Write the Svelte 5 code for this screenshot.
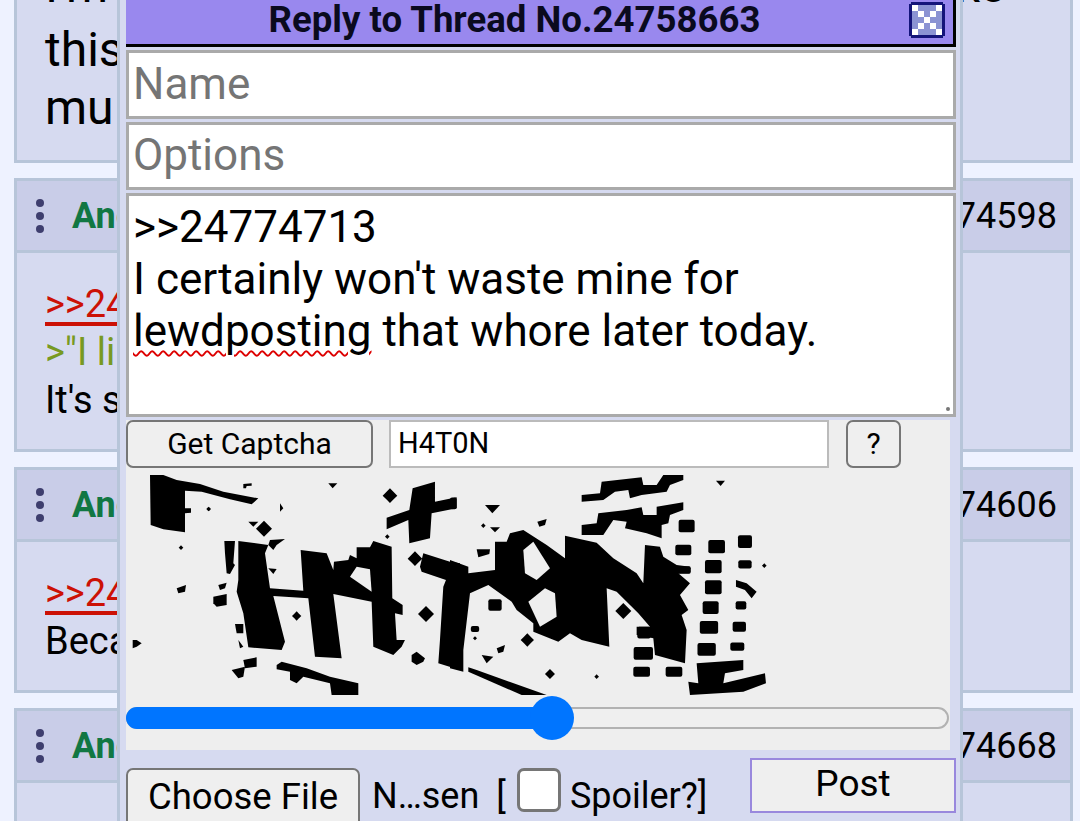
<script>
  const posts = [
    { id: "24774598", lines: [{ t: ">>24774", c: "quote" }, { t: '>"I like', c: "green" }, { t: "It's so", c: "" }], h: 274 },
    { id: "24774606", lines: [{ t: ">>24774", c: "quote" }, { t: "Because", c: "" }], h: 226 },
    { id: "24774668", lines: [], h: 160 },
  ];

  // captcha picture, traced in two 3x tiles
  const leftPolys = [
    "60,15 100,15 140,30 210,42 280,65 385,85 365,103 300,88 215,65 165,62 165,115 183,115 183,128 165,130 165,187 100,178 62,165",
    "340,42 365,40 365,47 350,48 348,55 340,55",
    "595,40 622,40 608,55",
    "848,55 915,35 915,95 980,82 980,115 905,130 900,205 838,220 835,150 770,178 770,143 838,120",
    "450,100 460,115 450,125",
    "355,155 385,155 370,170",
    "420,210 465,207 440,225 430,240 415,225",
    "283,213 315,213 310,280 315,285 300,312 290,310 285,250",
    "325,213 415,225 405,250 420,355 520,362 512,240 590,250 610,300 612,275 655,270 660,255 680,265 680,232 720,232 730,213 785,230 787,385 818,405 818,435 795,430 800,510 825,510 815,530 805,540 790,555 730,530 725,395 610,372 635,565 555,560 535,385 430,378 465,515 455,540 355,532 340,430 320,365 325,330",
    "880,250 960,275 990,280 990,600 925,580 930,510 940,350 948,330 875,305 870,290",
    "440,585 455,575 530,595 600,620 685,640 685,675 605,675 600,640 520,620 500,640 480,630 480,605 440,598",
    "140,355 168,345 165,365 145,370",
    "265,345 290,338 285,355 270,360",
    "250,380 290,372 290,405 260,410 250,400",
    "315,462 340,462 340,490 320,490",
    "325,510 340,530 330,535",
    "340,570 380,562 380,590 345,595",
    "305,600 345,590 340,620 325,625",
    "845,555 860,545 885,565 880,575 860,585 845,575",
    "8,510 20,510 35,520 20,530 8,535",
    "415,295 440,297 430,312",
  ];
  const leftHoles = ["660,320 680,290 720,298 725,365"];
  const rightPolys = [
    "0,270 55,290 55,310 135,300 135,215 170,215 180,190 220,180 290,225 345,265 345,197 440,218 490,265 560,310 580,340 585,225 630,230 640,260 680,285 720,290 720,310 685,310 720,340 690,375 715,420 695,435 710,480 705,580 615,555 610,505 560,495 560,470 600,470 565,430 500,365 470,355 478,530 395,510 360,490 325,515 250,485 250,460 200,420 185,395 115,345 60,370 40,540 40,605 0,595",
    "395,75 450,70 455,35 575,22 580,45 620,45 640,15 700,15 700,30 660,45 650,65 575,75 540,85 535,60 495,65 460,90 395,95",
    "395,165 440,160 445,130 530,120 575,112 580,135 620,135 620,110 700,97 700,120 660,135 655,160 635,165 635,205 590,190 525,175 530,155 490,150 460,195 395,195",
    "105,105 150,105 127,130",
    "120,172 150,172 135,187",
    "262,155 290,147 285,165 268,170",
    "80,238 120,238 118,252 85,262",
    "140,535 165,525 160,545 145,550",
    "95,555 130,560 110,580",
    "55,592 80,600 290,675 215,675 55,605",
    "715,635 745,640 740,580 880,570 880,600 825,610 820,640 945,610 948,640 880,665 720,675",
    "858,330 890,340 920,365 905,385 885,360 858,350",
    "798,32 825,32 812,48",
  ];
  const rightHoles = [
    "220,240 250,215 300,295 260,330 225,310",
    "235,395 285,355 315,370 320,440 295,455 270,470",
  ];
  const rightBlocks = [
    [710, 168, 48, 38], [700, 240, 48, 32], [800, 230, 50, 40], [885, 215, 42, 38],
    [790, 290, 50, 40], [885, 283, 40, 25], [790, 352, 50, 42], [873, 406, 32, 25],
    [782, 413, 48, 38], [777, 472, 55, 38], [868, 470, 40, 30], [770, 538, 55, 38],
    [862, 530, 42, 25], [575, 605, 50, 30], [672, 605, 50, 30], [580, 550, 58, 38],
    [582, 488, 40, 35], [700, 300, 45, 22], [135, 405, 40, 35], [75, 477, 25, 18], [10, 100, 20, 35],
  ];
  const star = (x, y, r) =>
    `${x},${y - r} ${x + r * 0.5},${y - r * 0.5} ${x + r},${y} ${x + r * 0.5},${y + r * 0.5} ${x},${y + r} ${x - r * 0.5},${y + r * 0.5} ${x - r},${y} ${x - r * 0.5},${y - r * 0.5}`;
  const leftStars = [[780, 77, 22], [402, 176, 24], [855, 266, 22], [888, 432, 24], [500, 438, 14], [236, 117, 7], [153, 233, 7], [772, 200, 7]];
  const rightStars = [[232, 510, 20], [300, 612, 15], [440, 620, 7], [520, 423, 24], [943, 287, 7], [100, 167, 7], [75, 505, 6]];
</script>

<div class="page">
  <div class="thread">
    <div class="post first">
      <div class="body">
        <div class="ghost"><span>I'm</span><span>ke</span></div>
        <div>this</div>
        <div>mu</div>
      </div>
    </div>
    {#each posts as post}
      <div class="post" style="height: {post.h}px">
        <div class="head">
          <span class="dots"><i></i><i></i><i></i></span>
          <span class="author">Anonymous</span>
          <span class="num">No.{post.id}</span>
        </div>
        <div class="body">
          {#each post.lines as line}
            <div class={line.c}>{line.t}</div>
          {/each}
        </div>
      </div>
    {/each}
  </div>

  <div class="reply">
    <div class="title">
      <span>Reply to Thread No.24758663</span>
      <svg class="close" viewBox="0 0 38 38" width="38" height="38" shape-rendering="crispEdges">
        <rect x="2" y="2" width="34" height="34" fill="#8b93d3" />
        <path d="M3 1H35V4H3zM3 34H35V37H3zM1 3H4V35H1zM34 3H37V35H34z" fill="#14147a" />
        <path d="M4 4h6v6H4zM28 4h6v6h-6zM10 10h6v6h-6zM22 10h6v6h-6zM16 16h6v6h-6zM10 22h6v6h-6zM22 22h6v6h-6zM4 28h6v6H4zM28 28h6v6h-6z" fill="#fff" />
      </svg>
    </div>
    <input class="field" placeholder="Name" />
    <input class="field" placeholder="Options" />
    <div class="area">
      <div>&gt;&gt;24774713</div>
      <div>I certainly won't waste mine for</div>
      <div><span class="typo">lewdposting</span> that whore later today.</div>
      <svg class="grip" viewBox="0 0 6 6" width="6" height="6"><circle cx="3" cy="3" r="2" fill="#777" /></svg>
    </div>
    <div class="captcha">
      <div class="cap-row">
        <button class="get">Get Captcha</button>
        <input class="cap-input" value="H4T0N" />
        <button class="help">?</button>
      </div>
      <svg class="cap-img" viewBox="126 475 824 220" width="824" height="220">
        <g transform="translate(130 470) scale(.3333)">
          {#each leftPolys as p}<polygon points={p} fill="#000" />{/each}
          {#each leftHoles as p}<polygon points={p} fill="#eee" />{/each}
          {#each leftStars as s}<polygon points={star(s[0], s[1], s[2])} fill="#000" />{/each}
        </g>
        <g transform="translate(450 470) scale(.3333)">
          {#each rightPolys as p}<polygon points={p} fill="#000" />{/each}
          {#each rightHoles as p}<polygon points={p} fill="#eee" />{/each}
          {#each rightBlocks as b}<rect x={b[0] - b[2] / 2} y={b[1] - b[3] / 2} width={b[2]} height={b[3]} rx="6" fill="#000" />{/each}
          {#each rightStars as s}<polygon points={star(s[0], s[1], s[2])} fill="#000" />{/each}
        </g>
      </svg>
      <div class="slider">
        <div class="fill" style="width: 426px"></div>
        <div class="thumb" style="left: 402px"></div>
      </div>
    </div>
    <div class="bottom">
      <button class="choose">Choose File</button>
      <span class="file">N…sen</span>
      <span class="br">[</span>
      <span class="check"></span>
      <span class="spoiler">Spoiler?]</span>
      <button class="post-btn">Post</button>
    </div>
  </div>
</div>

<style>
  :global(body) {
    margin: 0;
    background: #eef2ff;
  }

  .page {
    position: relative;
    width: 1080px;
    height: 821px;
    overflow: hidden;
    font-family: Roboto, sans-serif;
    font-size: 38px;
    color: #000;
  }

  .thread {
    display: flex;
    flex-direction: column;
    gap: 15px;
    padding: 0 7px 0 14px;
    margin-top: -40px;
  }

  .post {
    background: #d6daf0;
    border: 3px solid #b7c5d9;
    box-sizing: border-box;
  }

  .post.first {
    height: 203px;
  }

  .post.first .body {
    padding-top: 0;
    margin-top: -2px;
    font-size: 48px;
    line-height: 58px;
  }

  .ghost {
    display: flex;
    justify-content: space-between;
    width: 960px;
    margin: -6px 0 6px;
  }

  .head {
    display: flex;
    align-items: center;
    height: 72px;
    background: #c9cde8;
    border-bottom: 3px solid #b7c5d9;
    box-sizing: border-box;
    font-size: 36px;
  }

  .dots {
    display: flex;
    flex-direction: column;
    gap: 5px;
    margin-left: 19px;
    width: 8px;
  }

  .dots i {
    width: 8px;
    height: 8px;
    border-radius: 50%;
    background: #3e3e6e;
  }

  .author {
    margin-left: 28px;
    color: #117743;
    font-weight: 700;
  }

  .num {
    margin-left: auto;
    margin-right: 13px;
  }

  .body {
    padding: 27px 28px 0;
    line-height: 48px;
  }

  .quote {
    color: #cc1105;
    text-decoration: underline 4px;
    text-underline-offset: 5px;
  }

  .green {
    color: #789922;
  }

  .reply {
    position: absolute;
    left: 117px;
    top: -4px;
    width: 846px;
    height: 840px;
    box-sizing: border-box;
    background: #d6daf0;
    border-left: 3px solid #b7c5d9;
    border-right: 3px solid #b7c5d9;
    padding: 0 4px 0 6px;
  }

  .title {
    position: relative;
    height: 51px;
    box-sizing: border-box;
    padding-right: 50px;
    background: #9988ee;
    border-right: 3px solid #000;
    border-bottom: 3px solid #000;
    text-align: center;
    font-weight: 700;
    font-size: 36.6px;
    line-height: 48px;
    color: #0a0a1e;
  }

  .close {
    position: absolute;
    right: 7px;
    top: 5px;
  }

  .field {
    display: block;
    box-sizing: border-box;
    width: 830px;
    height: 69px;
    margin: 3px 0 0;
    padding: 0 4px 2px;
    border: 3px solid #aaa;
    outline: none;
    background: #fff;
    font: 44px Roboto, sans-serif;
  }

  .field + .field {
    height: 68px;
  }

  .field::placeholder {
    color: #757575;
    opacity: 1;
  }

  .area {
    position: relative;
    box-sizing: border-box;
    width: 830px;
    height: 224px;
    margin-top: 3px;
    padding: 5px 4px;
    border: 3px solid #aaa;
    background: #fff;
    font-size: 44px;
    line-height: 52px;
  }

  .typo {
    text-decoration: underline wavy #d00 2px;
    text-underline-offset: 4px;
  }

  .grip {
    position: absolute;
    right: 2px;
    bottom: 2px;
  }

  .captcha {
    width: 824px;
    height: 330px;
    background: #eee;
    margin-top: 3px;
  }

  .cap-row {
    display: flex;
    height: 48px;
  }

  button {
    font-family: Roboto, sans-serif;
    background: #efefef;
    border: 2px solid #767676;
    border-radius: 7px;
    color: #000;
    padding: 0 0 2px;
    box-sizing: border-box;
  }

  .get {
    width: 247px;
    font-size: 30px;
  }

  .cap-input {
    box-sizing: border-box;
    width: 440px;
    margin-left: 16px;
    padding: 0 7px 2px;
    border: 2px solid #bbb;
    background: #fff;
    outline: none;
    font: 29px Roboto, sans-serif;
  }

  .help {
    width: 55px;
    margin-left: 17px;
    font-size: 30px;
  }

  .cap-img {
    display: block;
    margin-top: 7px;
  }

  .slider {
    position: relative;
    box-sizing: border-box;
    width: 823px;
    height: 22px;
    margin-top: 12px;
    border: 2px solid #b2b2b2;
    border-radius: 11px;
    background: #efefef;
  }

  .fill {
    position: absolute;
    left: -2px;
    top: -2px;
    height: 22px;
    border-radius: 11px 0 0 11px;
    background: #0075ff;
  }

  .thumb {
    position: absolute;
    top: -13px;
    width: 44px;
    height: 44px;
    border-radius: 50%;
    background: #0075ff;
  }

  .bottom {
    position: relative;
    display: flex;
    align-items: flex-start;
    width: 830px;
    margin-top: 18px;
    font-size: 36px;
  }

  .choose {
    width: 234px;
    height: 70px;
    padding-bottom: 14px;
    font-size: 36.5px;
  }

  .file {
    margin-left: 12px;
    margin-top: 7px;
  }

  .br {
    margin-left: 17px;
    margin-top: 7px;
  }

  .check {
    box-sizing: border-box;
    width: 44px;
    height: 44px;
    margin-left: 11px;
    border: 3px solid #767676;
    border-radius: 7px;
    background: #fff;
  }

  .spoiler {
    margin-left: 9px;
    margin-top: 7px;
  }

  .post-btn {
    position: absolute;
    right: 0;
    top: -10px;
    width: 206px;
    height: 55px;
    padding-bottom: 4px;
    border: 2px solid #9988dd;
    border-radius: 0;
    font-size: 37px;
  }
</style>
